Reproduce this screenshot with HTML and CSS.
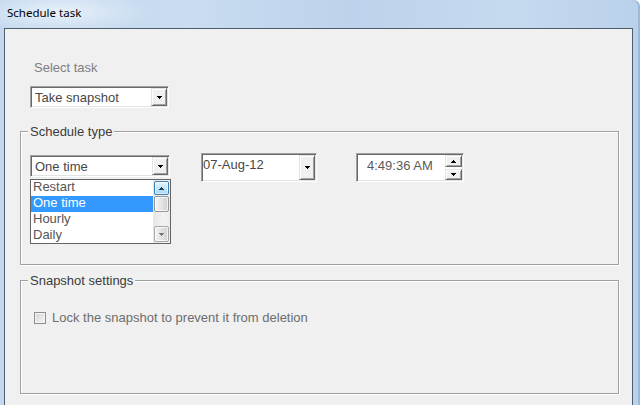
FILE: index.html
```html
<!DOCTYPE html>
<html>
<head>
<meta charset="utf-8">
<title>Schedule task</title>
<link rel="stylesheet" href="styles.css">
</head>
<body>
<div class="window">
  <div class="titlebar"><span class="title">Schedule task</span></div>
  <div class="client">
    <div class="task-label">Select task</div>
    <div class="combo combo-task">
      <span class="combo-text">Take snapshot</span>
      <span class="btn3d drop-btn"><svg width="5" height="3" viewBox="0 0 5 3" shape-rendering="crispEdges"><rect x="0" y="0" width="5" height="1"/><rect x="1" y="1" width="3" height="1"/><rect x="2" y="2" width="1" height="1"/></svg></span>
    </div>

    <div class="group group-schedule">
      <span class="group-label">Schedule type</span>
      <div class="schedule-row">
        <div class="combo-wrap">
          <div class="combo combo-type">
            <span class="combo-text">One time</span>
            <span class="btn3d drop-btn"><svg width="5" height="3" viewBox="0 0 5 3" shape-rendering="crispEdges"><rect x="0" y="0" width="5" height="1"/><rect x="1" y="1" width="3" height="1"/><rect x="2" y="2" width="1" height="1"/></svg></span>
          </div>
          <div class="droplist">
            <div class="items">
              <div class="item">Restart</div>
              <div class="item selected">One time</div>
              <div class="item">Hourly</div>
              <div class="item">Daily</div>
            </div>
            <div class="scrollbar">
              <span class="sb-btn sb-up"><svg width="5" height="3" viewBox="0 0 5 3" shape-rendering="crispEdges"><rect x="2" y="0" width="1" height="1"/><rect x="1" y="1" width="3" height="1"/><rect x="0" y="2" width="5" height="1"/></svg></span>
              <span class="sb-thumb"></span>
              <span class="sb-track"></span>
              <span class="sb-btn sb-down"><svg width="5" height="3" viewBox="0 0 5 3" shape-rendering="crispEdges"><rect x="0" y="0" width="5" height="1"/><rect x="1" y="1" width="3" height="1"/><rect x="2" y="2" width="1" height="1"/></svg></span>
            </div>
          </div>
        </div>

        <div class="picker picker-date">
          <span class="picker-text date-text">07-Aug-12</span>
          <span class="btn3d drop-btn"><svg width="5" height="3" viewBox="0 0 5 3" shape-rendering="crispEdges"><rect x="0" y="0" width="5" height="1"/><rect x="1" y="1" width="3" height="1"/><rect x="2" y="2" width="1" height="1"/></svg></span>
        </div>

        <div class="picker picker-time">
          <span class="picker-text time-text">4:49:36 AM</span>
          <span class="spin">
            <span class="btn3d spin-up"><svg width="5" height="3" viewBox="0 0 5 3" shape-rendering="crispEdges"><rect x="2" y="0" width="1" height="1"/><rect x="1" y="1" width="3" height="1"/><rect x="0" y="2" width="5" height="1"/></svg></span>
            <span class="btn3d spin-down"><svg width="5" height="3" viewBox="0 0 5 3" shape-rendering="crispEdges"><rect x="0" y="0" width="5" height="1"/><rect x="1" y="1" width="3" height="1"/><rect x="2" y="2" width="1" height="1"/></svg></span>
          </span>
        </div>
      </div>
    </div>

    <div class="group group-snapshot">
      <span class="group-label">Snapshot settings</span>
      <label class="check-row">
        <span class="checkbox"></span>
        <span class="check-text">Lock the snapshot to prevent it from deletion</span>
      </label>
    </div>
  </div>
</div>
</body>
</html>
```

FILE: styles.css
```css
* { box-sizing: border-box; }

html, body {
  margin: 0;
  padding: 0;
}

body {
  width: 640px;
  height: 405px;
  overflow: hidden;
  background: #ffffff;
  font-family: "Liberation Sans", Arial, sans-serif;
  font-size: 13px;
  line-height: 15px;
  color: #3c3c3c;
}

.window {
  width: 640px;
  height: 405px;
  display: flex;
  flex-direction: column;
  overflow: hidden;
  border-top-right-radius: 6px;
  background:
    radial-gradient(ellipse 90px 22px at 60px 12px, rgba(235, 243, 251, 0.9), rgba(235, 243, 251, 0) 100%),
    linear-gradient(to right, #c3d8ee 0%, #c9dcf0 30%, #bcd3eb 55%, #c6daef 80%, #b9d1ea 100%);
  box-shadow: inset -2px 0 0 #9fb8d3;
}

.titlebar {
  height: 28px;
  flex: none;
  padding: 5px 0 0 7px;
}

.title {
  font-family: "Noto Sans", "Liberation Sans", sans-serif;
  font-size: 11.5px;
  line-height: 16px;
  color: #000;
}

.client {
  flex: 1;
  margin: 0 7px 0 4px;
  background: #f0f0f0;
  border: 1px solid #4f5d6d;
  border-bottom: none;
  padding-top: 31px;
}

.task-label {
  margin-left: 29px;
  color: #808080;
}

/* combo boxes */
.combo,
.picker {
  display: flex;
  background: #fff;
  border: 1px solid;
  border-color: #a0a0a0 #ffffff #ffffff #a0a0a0;
  box-shadow: inset 1px 1px 0 #696969, inset -1px -1px 0 #e3e3e3;
}

.combo-task {
  margin: 11px 0 0 25px;
  width: 139px;
  height: 22px;
}

.combo-text {
  flex: 1;
  align-self: center;
  padding-left: 4px;
  color: #474747;
}

.btn3d {
  display: flex;
  align-items: center;
  justify-content: center;
  background: #f0f0f0;
  border: 1px solid;
  border-color: #e3e3e3 #696969 #696969 #e3e3e3;
  box-shadow: inset 1px 1px 0 #ffffff, inset -1px -1px 0 #a0a0a0;
}

.btn3d svg { fill: #000; display: block; }

.drop-btn {
  width: 16px;
  margin: 1px;
}

/* group boxes */
.group {
  position: relative;
  margin-left: 15px;
  width: 599px;
  border: 1px solid #a0a0a0;
  box-shadow: 1px 1px 0 #ffffff, inset 1px 1px 0 #ffffff;
}

.group-label {
  position: absolute;
  top: -8px;
  left: 7px;
  padding: 0 2px;
  background: #f0f0f0;
  color: #3c3c3c;
}

.group-schedule {
  margin-top: 23px;
  height: 134px;
  padding: 21px 0 0 9px;
}

.schedule-row {
  display: flex;
  align-items: flex-start;
}

.combo-wrap {
  position: relative;
  margin-top: 2px;
}

.combo-type {
  width: 140px;
  height: 22px;
}

/* dropped list */
.droplist {
  position: absolute;
  top: 24px;
  left: 0;
  width: 141px;
  height: 65px;
  display: flex;
  background: #fff;
  border: 1px solid #646464;
  z-index: 2;
}

.items {
  flex: 1;
  overflow: hidden;
}

.item {
  height: 16px;
  line-height: 14px;
  padding-left: 2px;
  color: #555;
}

.item.selected {
  background: #3399ff;
  color: #fff;
}

.scrollbar {
  width: 17px;
  display: flex;
  flex-direction: column;
  align-items: center;
  background: linear-gradient(to right, #e6e6e6, #f2f2f2 60%, #ececec);
}

.sb-btn {
  width: 15px;
  display: flex;
  align-items: center;
  justify-content: center;
  border-radius: 2px;
}

.sb-up {
  margin-top: 1px;
  height: 14px;
  border: 1px solid #3c7fb1;
  background: linear-gradient(#e5f4fc, #c4e4f8 50%, #a9d6f4);
  box-shadow: inset 0 0 0 1px rgba(255, 255, 255, 0.6);
}

.sb-up svg { fill: #1e3956; display: block; }

.sb-thumb {
  margin-top: 1px;
  width: 15px;
  height: 16px;
  border: 1px solid #979797;
  border-radius: 2px;
  background: linear-gradient(to right, #f6f6f6, #e4e4e4 50%, #cfcfcf);
  box-shadow: inset 0 0 0 1px rgba(255, 255, 255, 0.7);
}

.sb-track { flex: 1; }

.sb-down {
  height: 16px;
  margin-bottom: 1px;
  border: 1px solid #a8a8a8;
  background: linear-gradient(to right, #f4f4f4, #e2e2e2 50%, #d2d2d2);
  box-shadow: inset 0 0 0 1px rgba(255, 255, 255, 0.7);
}

.sb-down svg { fill: #777; display: block; }

/* date / time pickers */
.picker {
  height: 29px;
}

.picker-text {
  flex: 1;
}

.picker-date {
  margin-left: 31px;
  width: 116px;
}

.date-text {
  padding: 3px 0 0 1px;
  color: #474747;
}

.picker-time {
  margin-left: 39px;
  width: 108px;
}

.time-text {
  padding: 4px 0 0 10px;
  color: #5a5a5a;
}

.spin {
  width: 17px;
  margin: 1px;
  display: flex;
  flex-direction: column;
  gap: 2px;
}

.spin-up { height: 12px; }
.spin-down { height: 11px; }

/* snapshot settings */
.group-snapshot {
  margin-top: 15px;
  height: 114px;
  padding: 29px 0 0 13px;
}

.check-row {
  display: flex;
  align-items: center;
}

.checkbox {
  width: 12px;
  height: 12px;
  border: 1px solid #8f8f8f;
  background: linear-gradient(135deg, #d4d4d4, #f7f7f7);
  box-shadow: inset 0 0 0 1px #f3f3f3;
}

.check-text {
  margin-left: 6px;
  color: #6d6d6d;
}
```
